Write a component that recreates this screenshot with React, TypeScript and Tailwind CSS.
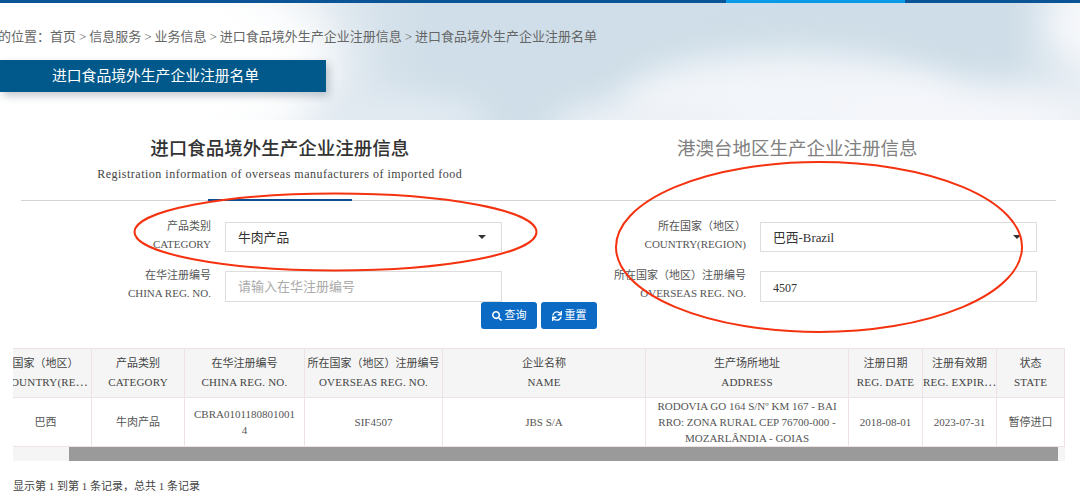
import { FaSearch, FaSync } from 'react-icons/fa';

const COLUMNS = [
  { zh: '国家（地区）', en: 'COUNTRY(RE⋯', width: 'w-[92px]' },
  { zh: '产品类别', en: 'CATEGORY', width: 'w-[93px]' },
  { zh: '在华注册编号', en: 'CHINA REG. NO.', width: 'w-[120px]' },
  { zh: '所在国家（地区）注册编号', en: 'OVERSEAS REG. NO.', width: 'w-[138px]' },
  { zh: '企业名称', en: 'NAME', width: 'w-[203px]' },
  { zh: '生产场所地址', en: 'ADDRESS', width: 'w-[203px]' },
  { zh: '注册日期', en: 'REG. DATE', width: 'w-[74px]' },
  { zh: '注册有效期', en: 'REG. EXPIR⋯', width: 'w-[74px]' },
  { zh: '状态', en: 'STATE', width: 'w-[68px]' },
];

const ROW = [
  '巴西',
  '牛肉产品',
  'CBRA01011808010014',
  'SIF4507',
  'JBS S/A',
  'RODOVIA GO 164 S/Nº KM 167 - BAIRRO: ZONA RURAL CEP 76700-000 - MOZARLÂNDIA - GOIAS',
  '2018-08-01',
  '2023-07-31',
  '暂停进口',
];

function FieldLabel({ zh, en }: { zh: string; en: string }) {
  return (
    <div className="-mt-[5px] h-[30px] pr-[14px] text-right text-[11px] leading-[18px] text-[#555]">
      <div>{zh}</div>
      <div>{en}</div>
    </div>
  );
}

function SelectBox({ value }: { value: string }) {
  return (
    <div className="flex h-[30px] items-center justify-between border border-[#ddd] pl-3 pr-[15px] text-[12.8px] text-[#333]">
      <span className="pt-[3px]">{value}</span>
      <span className="h-0 w-0 border-x-[4px] border-t-[4px] border-x-transparent border-t-[#333]" />
    </div>
  );
}

export default function App() {
  return (
    <div className="relative h-[500px] w-[1080px] overflow-hidden bg-white font-['Liberation_Serif','Noto_Sans_CJK_SC',serif]">
      {/* 顶部条 */}
      <div className="relative z-10 flex h-[3px]">
        <div className="w-[726px] bg-[#0b5597]" />
        <div className="w-[179px] bg-[#0a9be8]" />
        <div className="flex-1 bg-[#0b5597]" />
      </div>

      {/* 云背景 + 面包屑 */}
      <div className="relative h-[117px] overflow-hidden bg-[#fdfdfe]">
        <svg className="absolute inset-0" width="1080" height="117" viewBox="0 0 1080 117">
          <defs>
            <filter id="soft" x="-30%" y="-60%" width="160%" height="220%">
              <feGaussianBlur stdDeviation="16" />
            </filter>
            <filter id="softer" x="-30%" y="-60%" width="160%" height="220%">
              <feGaussianBlur stdDeviation="28" />
            </filter>
            <linearGradient id="fade" x1="0" x2="1" y1="0" y2="0">
              <stop offset="0" stopColor="#ffffff" />
              <stop offset="0.2" stopColor="#fbfcfd" />
              <stop offset="0.32" stopColor="#dbe5ed" />
              <stop offset="0.4" stopColor="#cfdee8" />
              <stop offset="0.93" stopColor="#cedde7" />
              <stop offset="1" stopColor="#e6edf3" />
            </linearGradient>
          </defs>
          <rect width="1080" height="117" fill="url(#fade)" />
          <ellipse cx="150" cy="60" rx="190" ry="90" fill="#ffffff" filter="url(#softer)" />
          <ellipse cx="400" cy="118" rx="90" ry="26" fill="#e3ebf2" filter="url(#soft)" />
          <ellipse cx="790" cy="100" rx="170" ry="50" fill="#f2f5f9" filter="url(#soft)" />
          <ellipse cx="960" cy="115" rx="130" ry="36" fill="#f4f6fa" filter="url(#soft)" />
          <ellipse cx="640" cy="125" rx="90" ry="26" fill="#eef2f7" filter="url(#soft)" />
          <ellipse cx="1090" cy="20" rx="40" ry="40" fill="#f6f8fb" filter="url(#soft)" />
        </svg>
        <div className="relative">
          <p className="-ml-[15px] whitespace-nowrap pt-[24px] text-[13px] leading-[20px] text-[#666] [word-spacing:-0.3px]">
            您的位置：首页 &gt; 信息服务 &gt; 业务信息 &gt; 进口食品境外生产企业注册信息 &gt; 进口食品境外生产企业注册名单
          </p>
          <div className="mt-[13px] flex h-[32px] w-[326px] items-center bg-[#00598a] pl-[52px] text-[14.8px] text-white shadow-[3px_4px_8px_rgba(60,80,100,0.3)]">
            进口食品境外生产企业注册名单
          </div>
        </div>
      </div>

      {/* 切换标签 */}
      <div className="ml-[21px] w-[1035px] border-b border-[#d4d4d4]">
        <div className="-mb-px grid grid-cols-2 pt-[17px] text-center">
          <div>
            <h2 className="text-[18.5px] font-medium leading-[24px] text-[#333]">进口食品境外生产企业注册信息</h2>
            <p className="mt-[4px] text-[12px] leading-[18px] tracking-[0.5px] text-[#444]">
              Registration information of overseas manufacturers of imported food
            </p>
            <div className="mx-auto mt-4 h-[2px] w-[144px] bg-[#0f4c96]" />
          </div>
          <div>
            <h2 className="text-[18.5px] leading-[24px] text-[#808080]">港澳台地区生产企业注册信息</h2>
          </div>
        </div>
      </div>

      {/* 查询表单 */}
      <div className="mt-[21px] grid grid-cols-[225px_277px_258px_277px] gap-y-[19px]">
        <FieldLabel zh="产品类别" en="CATEGORY" />
        <SelectBox value="牛肉产品" />
        <FieldLabel zh="所在国家（地区）" en="COUNTRY(REGION)" />
        <SelectBox value="巴西-Brazil" />
        <FieldLabel zh="在华注册编号" en="CHINA REG. NO." />
        <input
          readOnly
          placeholder="请输入在华注册编号"
          className="h-[31px] border border-[#ddd] px-3 text-[13px] text-[#333] outline-none placeholder:text-[#aaa]"
        />
        <FieldLabel zh="所在国家（地区）注册编号" en="OVERSEAS REG. NO." />
        <input
          readOnly
          value="4507"
          className="h-[31px] border border-[#ddd] px-3 pt-[3px] text-[12px] text-[#333] outline-none"
        />
      </div>
      <div className="ml-[481px] flex gap-[4px]">
        <button className="flex h-[27px] w-[56px] items-center justify-center gap-[3px] rounded-[3px] bg-[#0a6ac4] text-[11px] text-white">
          <FaSearch className="h-[10px] w-[10px]" />
          查询
        </button>
        <button className="flex h-[27px] w-[56px] items-center justify-center gap-[3px] rounded-[3px] bg-[#0a6ac4] text-[11px] text-white">
          <FaSync className="h-[10px] w-[10px]" />
          重置
        </button>
      </div>

      {/* 结果表格 */}
      <div className="ml-[13px] mt-[19px] w-[1052px] overflow-hidden">
        <table className="-ml-[14px] w-[1065px] table-fixed border-collapse text-center text-[11px] text-[#555]">
          <colgroup>
            {COLUMNS.map((c) => (
              <col key={c.en} className={c.width} />
            ))}
          </colgroup>
          <thead>
            <tr className="h-[49px] bg-[#f5f5f5]">
              {COLUMNS.map((c) => (
                <th key={c.en} className="overflow-hidden whitespace-nowrap border border-[#efe2e2] px-0 font-normal leading-[19px] text-[#444]">
                  <div>{c.zh}</div>
                  <div className="tracking-[0.2px]">{c.en}</div>
                </th>
              ))}
            </tr>
          </thead>
          <tbody>
            <tr className="h-[49px]">
              {ROW.map((v) => (
                <td key={v} className="break-all border border-[#efe2e2] px-2 leading-[16px]">
                  {v}
                </td>
              ))}
            </tr>
          </tbody>
        </table>
        <div className="h-[14px] bg-[#f5f5f5] pl-[56px] pr-[7px]">
          <div className="h-full bg-[#9a9a9a]" />
        </div>
      </div>

      <p className="ml-[13px] mt-[17px] text-[11px] leading-4 text-[#444]">显示第 1 到第 1 条记录，总共 1 条记录</p>

      {/* 红色手绘圈 */}
      <svg className="pointer-events-none absolute left-0 top-0" width="1080" height="500" viewBox="0 0 1080 500" fill="none">
        <ellipse cx="335.5" cy="232" rx="201" ry="38.5" stroke="#f5320f" strokeWidth="2" />
        <ellipse cx="819" cy="247" rx="203" ry="85" stroke="#f5320f" strokeWidth="2" />
      </svg>
    </div>
  );
}
